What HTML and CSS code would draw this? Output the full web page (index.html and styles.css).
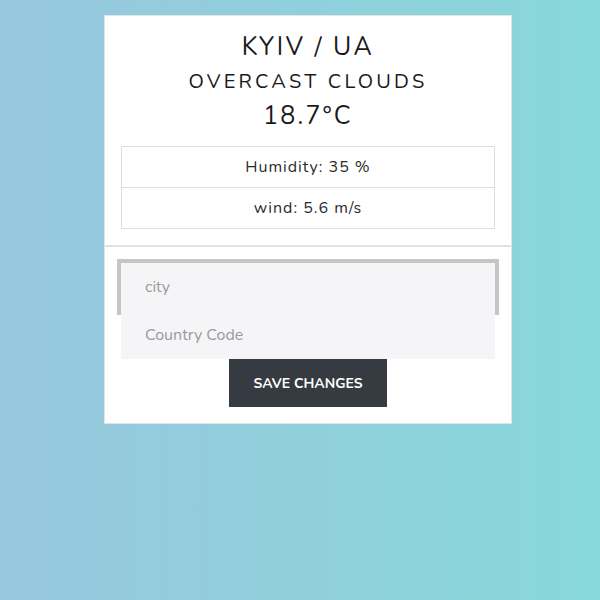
FILE: index.html
```html
<!DOCTYPE html>
<html lang="en">
<head>
<meta charset="utf-8">
<title>Weather</title>
<link rel="stylesheet" href="styles.css">
</head>
<body>
<div class="page">
  <div class="card">
    <section class="weather">
      <h1 class="city">KYIV / UA</h1>
      <h2 class="desc">OVERCAST CLOUDS</h2>
      <div class="temp">18.7°C</div>
      <ul class="details">
        <li class="detail">Humidity: 35 %</li>
        <li class="detail">wind: 5.6 m/s</li>
      </ul>
    </section>
    <form class="settings">
      <input class="field field-focus" type="text" placeholder="city">
      <input class="field field-next" type="text" placeholder="Country Code">
      <button class="save" type="button">SAVE CHANGES</button>
    </form>
  </div>
</div>
</body>
</html>
```
FILE: styles.css
```css
html, body {
  margin: 0;
  padding: 0;
  height: 100%;
}
body {
  background: linear-gradient(to right, #98c7de, #88d8da);
  font-family: "Nunito", "Lato", "Open Sans", sans-serif;
  color: #1a1a1a;
}
.page {
  padding: 15px 0 0 16px;
}
.card {
  width: 406px;
  margin: 0 auto;
  background: #fff;
  border: 1px solid #e4e4e4;
}
.weather {
  padding: 16px 16px 16px;
  text-align: center;
  border-bottom: 2px solid #e2e2e2;
}
.city {
  margin: 0;
  font-size: 25px;
  font-weight: 400;
  letter-spacing: 2.5px;
  line-height: 30px;
}
.desc {
  margin: 5px 0 0;
  font-size: 20px;
  font-weight: 400;
  letter-spacing: 3.2px;
  line-height: 30px;
}
.temp {
  margin: 4px 0 0;
  font-size: 25px;
  letter-spacing: 2.2px;
  line-height: 30px;
}
.details {
  list-style: none;
  margin: 15px 0 0;
  padding: 0;
  border: 1px solid #dedede;
}
.detail {
  height: 40px;
  line-height: 40px;
  font-size: 16px;
  letter-spacing: 1px;
  color: #2a2a2a;
}
.detail + .detail {
  border-top: 1px solid #dedede;
}
.settings {
  padding: 16px;
  display: flex;
  flex-direction: column;
  align-items: center;
}
.field {
  display: block;
  box-sizing: border-box;
  width: 100%;
  height: 48px;
  margin: 0;
  border: 0;
  padding: 0 24px;
  background: #f5f5f7;
  font-family: inherit;
  font-size: 16px;
  color: #333;
  outline: none;
}
.field::placeholder {
  color: #9a9a9a;
}
.field-focus {
  box-shadow: 0 0 0 4px #c6c6c6;
}
.field-next {
  position: relative;
}
.save {
  height: 48px;
  padding: 0 24px;
  border: 0;
  background: #363a41;
  color: #fff;
  font-family: inherit;
  font-size: 14px;
  font-weight: 700;
  cursor: pointer;
}
```
